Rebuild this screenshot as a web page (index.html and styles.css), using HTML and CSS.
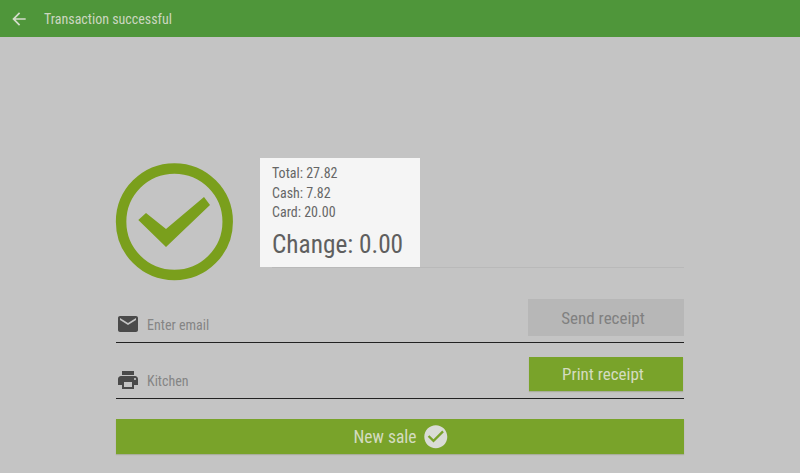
FILE: index.html
```html
<!DOCTYPE html>
<html lang="en">
<head>
<meta charset="utf-8">
<title>Transaction successful</title>
<link rel="stylesheet" href="styles.css">
</head>
<body>
<header class="topbar">
  <svg class="back" viewBox="0 0 24 24" width="20" height="20"><path d="M20 11H7.830l5.590-5.590L12 4l-8 8 8 8 1.410-1.410L7.830 13H20v-2z" fill="#d5dccb"/></svg>
  <span class="title">Transaction successful</span>
</header>
<main class="content">
  <section class="summary">
    <svg class="status" viewBox="0 0 118 118" width="118" height="118">
      <circle cx="59.400" cy="58.700" r="53.300" fill="none" stroke="#7a9f1c" stroke-width="10.500"/>
      <polygon points="23.300,57 31,50 51,66 89,34 95,42 51,84" fill="#7a9f1c"/>
    </svg>
    <div class="totals">
      <div class="panel">
        <div class="line">Total: 27.82</div>
        <div class="line">Cash: 7.82</div>
        <div class="line">Card: 20.00</div>
        <div class="change">Change: 0.00</div>
      </div>
    </div>
  </section>
  <section class="row row-email">
    <svg class="icon" viewBox="0 0 24 24" width="24" height="24"><path d="M20 4H4c-1.100 0-1.990.9-1.990 2L2 18c0 1.100.9 2 2 2h16c1.100 0 2-.9 2-2V6c0-1.100-.9-2-2-2zm0 4l-8 5-8-5V6l8 5 8-5v2z" fill="#4a4a4a"/></svg>
    <span class="field">Enter email</span>
    <div class="btn btn-disabled">Send receipt</div>
  </section>
  <section class="row row-print">
    <svg class="icon" viewBox="0 0 24 24" width="24" height="24"><path d="M19 8H5c-1.660 0-3 1.340-3 3v6h4v4h12v-4h4v-6c0-1.660-1.340-3-3-3zm-3 11H8v-5h8v5zm3-7c-.55 0-1-.45-1-1s.45-1 1-1 1 .45 1 1-.45 1-1 1zm-1-9H6v4h12V3z" fill="#4a4a4a"/></svg>
    <span class="field">Kitchen</span>
    <div class="btn btn-green">Print receipt</div>
  </section>
  <div class="new-sale">
    <span>New sale</span>
    <svg viewBox="0 0 24 24" width="27.600" height="27.600"><path d="M12 2C6.480 2 2 6.480 2 12s4.480 10 10 10 10-4.480 10-10S17.520 2 12 2zm-2 15l-5-5 1.410-1.410L10 14.170l7.590-7.590L19 8l-9 9z" fill="#dadcd6"/></svg>
  </div>
</main>
</body>
</html>
```
FILE: styles.css
```css
* { box-sizing: border-box; }
html, body { margin: 0; height: 100%; }
body {
  background: #c4c4c4;
  font-family: Roboto, "Liberation Sans", sans-serif;
  font-stretch: 75%;
  color: #555;
  overflow: hidden;
}
.topbar {
  height: 37px;
  background: #4f963a;
  display: flex;
  align-items: center;
  padding-left: 9px;
}
.back { margin-right: 15px; }
.title {
  font-size: 14px;
  color: #ccd6c0;
}
.content { padding: 126px 116px 0 115px; }
.summary { display: flex; height: 136px; align-items: flex-start; }
.status { flex: none; }
.totals {
  flex: 1;
  margin: -5px 0 0 39px;
  height: 110px;
  border-bottom: 1px solid #b9b9b9;
}
.panel {
  width: 160px;
  height: 109px;
  margin-left: -12px;
  padding: 6px 12px 0;
  background: #f5f5f5;
}
.line {
  font-size: 14px;
  line-height: 19.500px;
  color: #666;
  white-space: nowrap;
}
.change {
  margin-top: 6px;
  font-size: 25.300px;
  line-height: 32px;
  color: #5f5f5f;
  white-space: nowrap;
}
.row {
  display: flex;
  align-items: flex-start;
  margin-left: 1px;
  border-bottom: 1.500px solid #222;
}
.row-email { height: 44px; }
.row-print { height: 42px; margin-top: 14px; }
.icon { flex: none; margin-top: 13px; }
.row-print .icon { margin-top: 11px; }
.row .field {
  flex: 1;
  margin: 18px 0 0 7px;
  font-size: 14px;
  line-height: 16px;
  color: #858585;
}
.row-print .field { margin-top: 16px; }
.btn {
  flex: none;
  display: flex;
  align-items: center;
  justify-content: center;
  padding-right: 6px;
  font-size: 17px;
}
.btn-disabled {
  width: 156px;
  height: 37px;
  background: #b7b7b7;
  color: #808080;
}
.btn-green {
  width: 154px;
  height: 34px;
  margin: 0 1px 0 0;
  background: #79a32a;
  color: #d4dcc0;
  box-shadow: 0 1px 1px #a9ae9c;
}
.new-sale {
  height: 35px;
  margin: 20px 0 0 1px;
  padding-left: 3px;
  background: #79a32a;
  box-shadow: 0 1px 1px #a9ae9c;
  display: flex;
  align-items: center;
  justify-content: center;
  gap: 5.400px;
  color: #d4dcc0;
  font-size: 17.500px;
}
```
